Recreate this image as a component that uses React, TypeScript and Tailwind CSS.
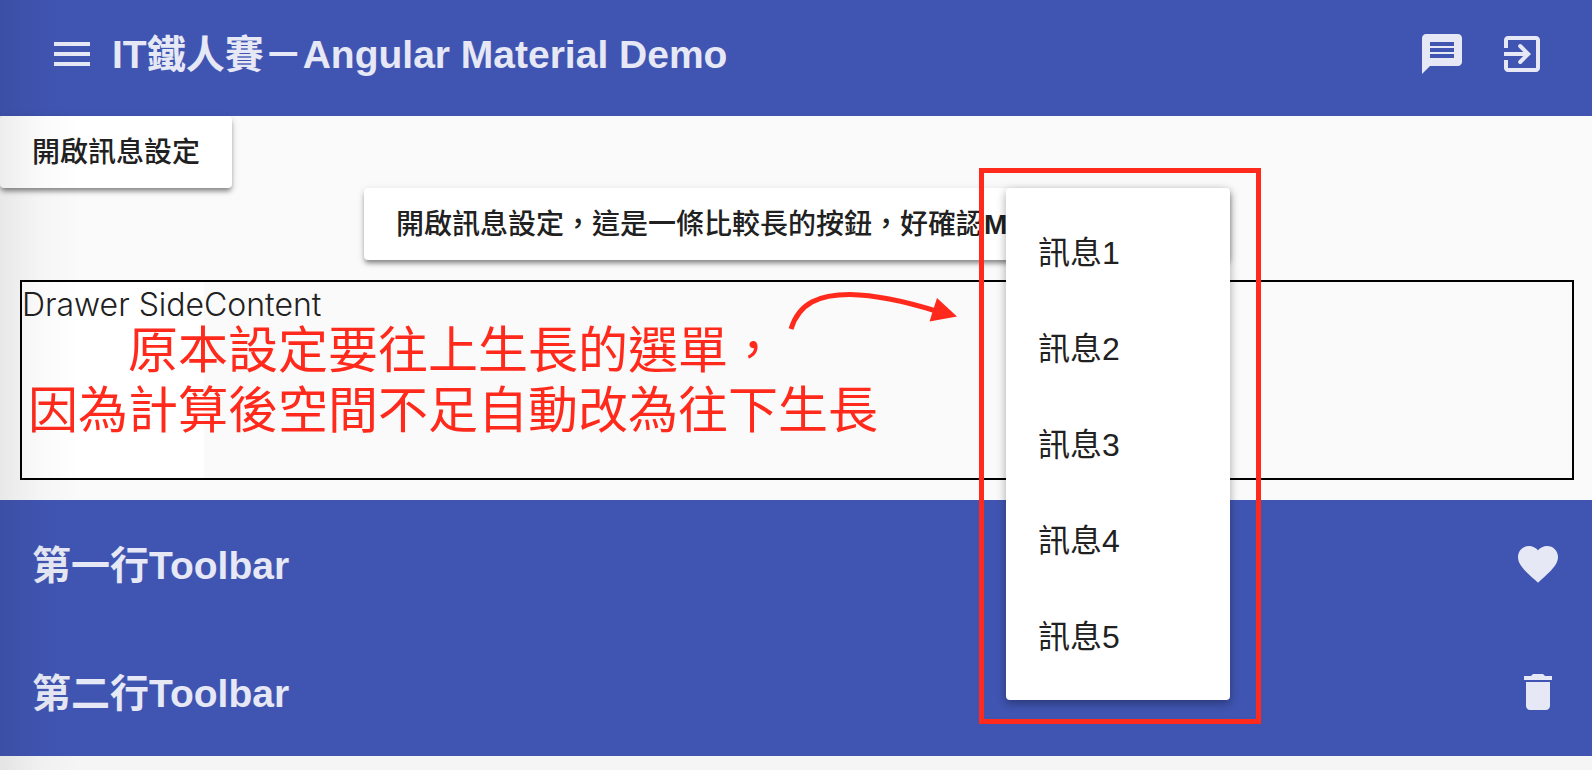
import type { ReactNode } from "react";
import { MdDelete, MdFavorite, MdMenu, MdMessage } from "react-icons/md";

const messages = ["訊息1", "訊息2", "訊息3", "訊息4", "訊息5"];

function IconButton({ label, children }: { label: string; children: ReactNode }) {
  return (
    <button type="button" aria-label={label} className="block size-12 shrink-0">
      {children}
    </button>
  );
}

function ExitIcon() {
  return (
    <svg className="size-12" viewBox="0 0 24 24" fill="currentColor" aria-hidden="true">
      <path d="M19 3H5c-1.110 0-2 .9-2 2v4h2V5h14v14H5v-4H3v4c0 1.100.89 2 2 2h14c1.100 0 2-.9 2-2V5c0-1.100-.9-2-2-2z" />
      <path d="M3 11h11v2H3z" />
      <path d="M11.100 8l3.990 4-3.990 4" fill="none" stroke="currentColor" strokeWidth="2" strokeLinecap="round" />
    </svg>
  );
}

function ToolbarRow({ title, children }: { title: string; children: ReactNode }) {
  return (
    <div className="flex h-32 items-center justify-between pl-8 pr-[30px]">
      <span className="pt-1">{title}</span>
      {children}
    </div>
  );
}

function MessageMenu() {
  return (
    <div
      role="menu"
      className="absolute right-0 top-0 z-20 flex w-56 flex-col rounded-sm bg-white py-4 shadow-[0_4px_8px_rgba(0,0,0,0.24),0_2px_12px_rgba(0,0,0,0.12)]"
    >
      {messages.map((message) => (
        <button key={message} type="button" role="menuitem" className="h-24 px-8 pt-[2px] text-left text-[32px]">
          {message}
        </button>
      ))}
    </div>
  );
}

const raised =
  "h-[72px] rounded-sm bg-white px-8 pt-[2px] text-left text-[28px] font-medium whitespace-nowrap shadow-[0_4px_5px_-1px_rgba(0,0,0,0.42),0_2px_8px_rgba(0,0,0,0.12)]";

export default function App() {
  return (
    <div className="relative flex min-h-screen flex-col overflow-hidden bg-[#fafafa] font-['Liberation_Sans','Noto_Sans_CJK_TC',sans-serif] text-[#212121]">
      <header className="flex h-[116px] items-center bg-[#4055b2] pb-2 pl-12 pr-[46px] text-[39px] font-bold text-[#e6e8f5]">
        <IconButton label="選單">
          <MdMenu className="size-12" />
        </IconButton>
        <h1 className="ml-4 flex-1 pt-[2px]">IT鐵人賽－Angular Material Demo</h1>
        <div className="flex gap-8">
          <IconButton label="訊息">
            <MdMessage className="size-12" />
          </IconButton>
          <IconButton label="登出">
            <ExitIcon />
          </IconButton>
        </div>
      </header>

      <main>
        <div className="flex">
          <button type="button" className={raised}>
            開啟訊息設定
          </button>
        </div>
        <div className="flex justify-center pl-[2px]">
          <div className="relative w-[866px]">
            <button type="button" className={`${raised} w-full`}>
              開啟訊息設定，這是一條比較長的按鈕，好確認<span className="font-bold">M</span>
            </button>
            <MessageMenu />
            <div className="pointer-events-none absolute -right-[31px] -top-5 z-30 h-[556px] w-[282px] border-[5px] border-[#ff2a1c]" />
          </div>
        </div>

        <section className="relative mb-5 ml-5 mr-[18px] mt-5 flex h-[200px] border-2 border-black font-[Inter,'Noto_Sans_CJK_TC',sans-serif] text-[32px] leading-[46px]">
          <aside className="w-[182px] bg-white font-light whitespace-nowrap">Drawer Side</aside>
          <div className="flex-1 font-light">Content</div>
          <p className="absolute left-1.5 top-[38px] text-center text-[50px] leading-[60px] whitespace-nowrap text-[#ff2a1c]">
            原本設定要往上生長的選單，
            <br />
            因為計算後空間不足自動改為往下生長
          </p>
          <svg className="absolute left-[760px] top-0 h-14 w-48" viewBox="782 282 192 56" fill="none" aria-hidden="true">
            <path d="M791 329C799 303 819 294.500 850 294.500C874 295 904 301 936 311" stroke="#ff2a1c" strokeWidth="5" />
            <path d="M937 298L957 316.500L929.500 321.500Z" fill="#ff2a1c" />
          </svg>
        </section>
      </main>

      <div className="bg-[#4055b2] text-[39px] font-bold text-[#e6e8f5]">
        <ToolbarRow title="第一行Toolbar">
          <IconButton label="收藏">
            <MdFavorite className="size-12" />
          </IconButton>
        </ToolbarRow>
        <ToolbarRow title="第二行Toolbar">
          <IconButton label="刪除">
            <MdDelete className="size-12" />
          </IconButton>
        </ToolbarRow>
      </div>
      <footer className="min-h-3.5 flex-1 bg-[#f5f5f5]" />

      <div className="pointer-events-none absolute inset-y-0 left-0 z-40 w-20 bg-linear-to-r from-black/7 via-black/2 to-transparent" />
    </div>
  );
}
